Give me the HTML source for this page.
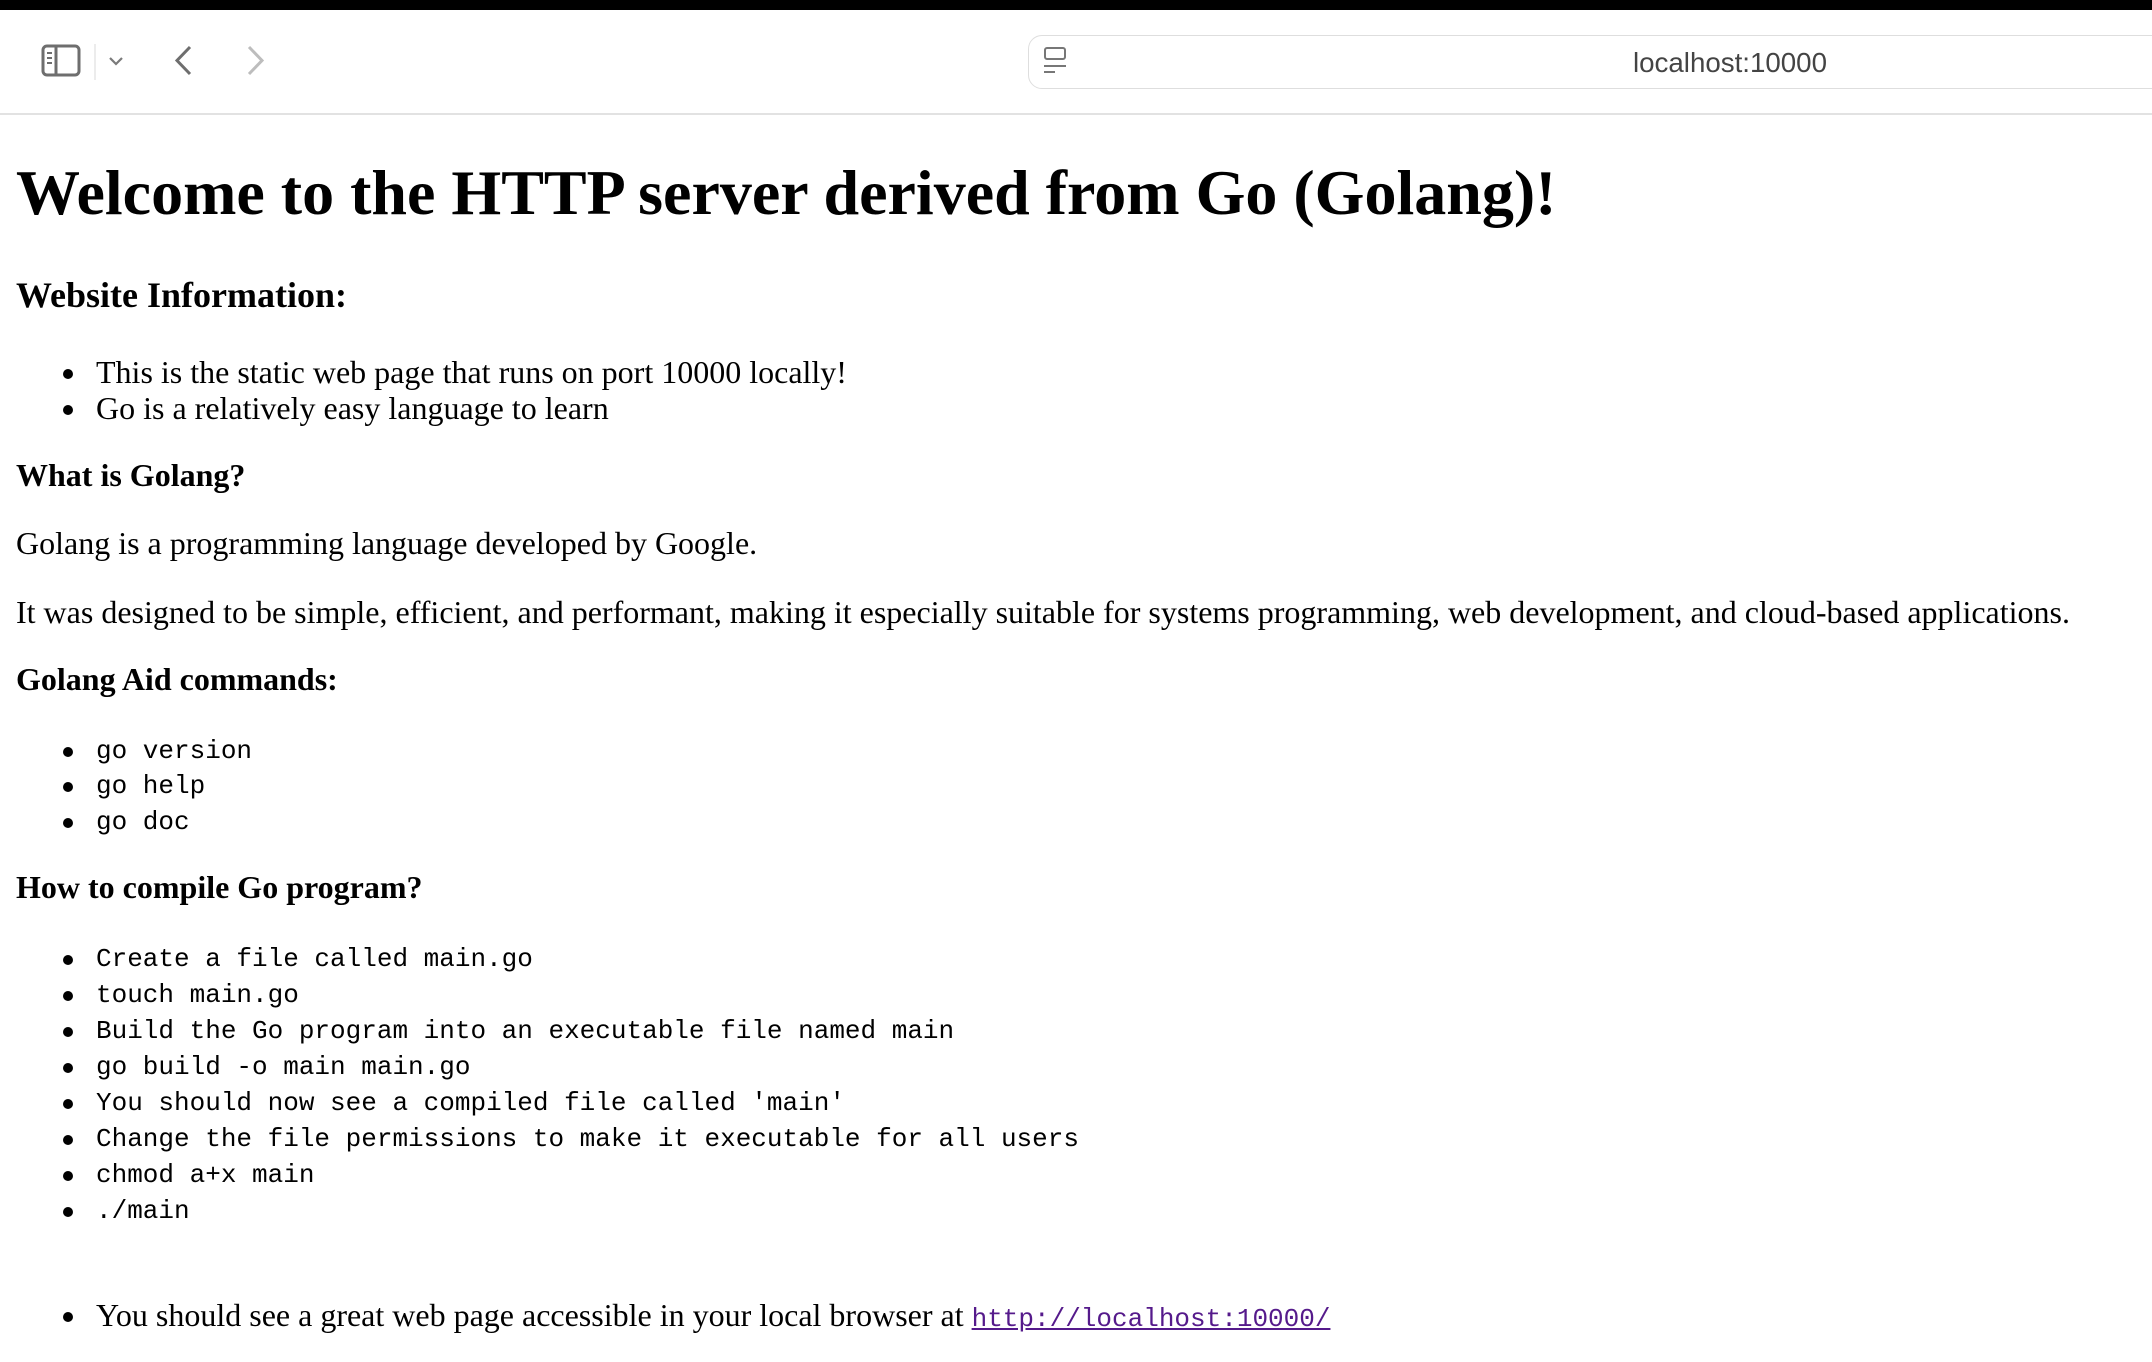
<!DOCTYPE html>
<html><head><meta charset="utf-8"><style>
html,body{margin:0;padding:0;background:#fff;width:2152px;height:1362px;overflow:hidden;position:relative}
.a{position:absolute;left:16px;margin:0;white-space:nowrap;line-height:1;color:#000}
.m{font-family:"Liberation Mono",monospace;font-size:26px}
h1.a{font:bold 64px/1 "Liberation Serif",serif}
h2.a{font:bold 36px/1 "Liberation Serif",serif}
h3.a{font:bold 32px/1 "Liberation Serif",serif}
.b{font:32px/1 "Liberation Serif",serif}
.li{left:96px}
.li:before{content:"";position:absolute;left:-33px;width:10px;height:10px;border-radius:50%;background:#000}
.b.li:before{top:13px}
.m.li:before{top:9px}
.lk{color:#551a8b;text-decoration:underline;font-family:"Liberation Mono",monospace;font-size:26px}
</style></head><body>
<div style="position:absolute;left:0;top:0;width:2152px;height:10px;background:#000"></div>
<div style="position:absolute;left:0;top:113px;width:2152px;height:2px;background:#e2e2e2"></div>
<svg style="position:absolute;left:0;top:0" width="400" height="110">
<rect x="43" y="46" width="36" height="29" rx="4" fill="none" stroke="#6e6e6e" stroke-width="3"/>
<line x1="56" y1="46" x2="56" y2="75" stroke="#6e6e6e" stroke-width="3"/>
<line x1="47" y1="53" x2="52" y2="53" stroke="#6e6e6e" stroke-width="2"/>
<line x1="47" y1="58" x2="52" y2="58" stroke="#6e6e6e" stroke-width="2"/>
<line x1="47" y1="63" x2="52" y2="63" stroke="#6e6e6e" stroke-width="2"/>
<line x1="95" y1="44" x2="95" y2="80" stroke="#e6e6e6" stroke-width="1.5"/>
<polyline points="110,58 116,64 122,58" fill="none" stroke="#7a7a7a" stroke-width="2.2"/>
<polyline points="190,47 177,60.5 190,74" fill="none" stroke="#6e6e6e" stroke-width="3"/>
<polyline points="249,47 262,60.5 249,74" fill="none" stroke="#bdbdbd" stroke-width="3"/>
</svg>
<div style="position:absolute;left:1028px;top:35px;width:1160px;height:54px;border:1.5px solid #dedede;border-radius:14px;box-sizing:border-box"></div>
<svg style="position:absolute;left:1040px;top:44px" width="32" height="34">
<rect x="5" y="4" width="20" height="11" rx="2" fill="none" stroke="#777" stroke-width="2"/>
<line x1="4" y1="22" x2="26" y2="22" stroke="#777" stroke-width="2"/>
<line x1="4" y1="28" x2="15" y2="28" stroke="#777" stroke-width="2"/>
</svg>
<div style="position:absolute;left:1633px;top:46px;font:27.7px/1.2 'Liberation Sans',sans-serif;color:#444">localhost:10000</div>

<h1 class="a" style="top:161px">Welcome to the HTTP server derived from Go (Golang)!</h1>
<h2 class="a" style="top:277px">Website Information:</h2>
<div class="a b li" style="top:356px">This is the static web page that runs on port 10000 locally!</div>
<div class="a b li" style="top:392px">Go is a relatively easy language to learn</div>
<h3 class="a" style="top:459px">What is Golang?</h3>
<div class="a b" style="top:527px">Golang is a programming language developed by Google.</div>
<div class="a b" style="top:596px">It was designed to be simple, efficient, and performant, making it especially suitable for systems programming, web development, and cloud-based applications.</div>
<h3 class="a" style="top:663px">Golang Aid commands:</h3>
<div class="a m li" style="top:738px">go version</div>
<div class="a m li" style="top:773px">go help</div>
<div class="a m li" style="top:809px">go doc</div>
<h3 class="a" style="top:871px">How to compile Go program?</h3>
<div class="a m li" style="top:946px">Create a file called main.go</div>
<div class="a m li" style="top:982px">touch main.go</div>
<div class="a m li" style="top:1018px">Build the Go program into an executable file named main</div>
<div class="a m li" style="top:1054px">go build -o main main.go</div>
<div class="a m li" style="top:1090px">You should now see a compiled file called 'main'</div>
<div class="a m li" style="top:1126px">Change the file permissions to make it executable for all users</div>
<div class="a m li" style="top:1162px">chmod a+x main</div>
<div class="a m li" style="top:1198px">./main</div>
<div class="a b li" style="top:1299px">You should see a great web page accessible in your local browser at <span class="lk">http://localhost:10000/</span></div>
</body></html>
